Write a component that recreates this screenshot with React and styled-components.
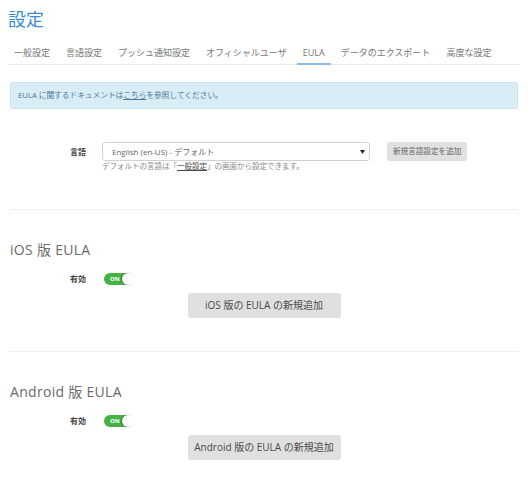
import React from "react";
import styled, { createGlobalStyle } from "styled-components";

const GlobalStyle = createGlobalStyle`
  html, body { margin: 0; padding: 0; background: #fff; }
  body {
    font-family: "Open Sans", "Noto Sans CJK JP", sans-serif;
    color: #555;
  }
`;

const Page = styled.div`
  padding: 0 8px;
  width: 528px;
  box-sizing: border-box;
`;

const Title = styled.h1`
  margin: 7px 0 0;
  font-size: 18px;
  line-height: 24px;
  font-weight: 400;
  color: #3d8dd3;
`;

const Nav = styled.nav`
  display: flex;
  gap: 4px;
  margin-top: 9px;
  border-bottom: 1px solid #e8e8e8;
`;

const Tab = styled.div`
  padding: 5px 6px 2px;
  font-size: 9px;
  line-height: 16px;
  color: #777;
  border-bottom: 2px solid ${(p) => (p.$active ? "#8cbce6" : "transparent")};
  margin-bottom: -1px;
  white-space: nowrap;
`;

const Content = styled.div`
  padding: 0 2px;
`;

const Alert = styled.div`
  margin-top: 17px;
  padding: 0 7px;
  height: 25px;
  line-height: 25px;
  font-size: 7.7px;
  color: #4b7894;
  background: #d9edf7;
  border: 1px solid #c6e6f1;
  border-radius: 2px;
`;

const Link = styled.span`
  text-decoration: underline;
  color: ${(p) => p.$color || "inherit"};
`;

const FormRow = styled.div`
  display: grid;
  grid-template-columns: 76px 1fr;
  column-gap: 16px;
  align-items: center;
  margin-top: ${(p) => p.$mt || 0}px;
`;

const Label = styled.div`
  text-align: right;
  font-size: 8px;
  font-weight: 700;
  color: #444;
  line-height: 12px;
`;

const FieldLine = styled.div`
  display: flex;
  align-items: center;
  gap: 17px;
`;

const Select = styled.div`
  width: 268px;
  height: 19px;
  box-sizing: border-box;
  border: 1px solid #d0d0d0;
  border-radius: 3px;
  padding: 0 9px;
  font-size: 8px;
  line-height: 17px;
  color: #666;
  display: flex;
  align-items: center;
  justify-content: space-between;
`;

const Arrow = styled.svg`
  width: 5px;
  height: 4px;
  margin-right: -5px;
`;

const SmallButton = styled.div`
  height: 19px;
  padding: 0 6px;
  background: #e0e0e0;
  border-radius: 2px;
  font-size: 7.6px;
  line-height: 19px;
  color: #666;
  white-space: nowrap;
`;

const Help = styled.div`
  font-size: 7.5px;
  line-height: 10px;
  color: #888;
`;

const Divider = styled.hr`
  margin: ${(p) => p.$mt}px 0 0;
  border: 0;
  height: 1px;
  background: #efefef;
`;

const Heading = styled.h2`
  margin: 30px 0 0;
  font-size: 14px;
  line-height: 20px;
  font-weight: 400;
  color: #6a6a6a;
  letter-spacing: 0.3px;
`;

const ToggleCell = styled.div`
  padding-left: 2px;
`;

const Toggle = styled.div`
  position: relative;
  width: 29px;
  height: 12px;
  border-radius: 6px;
  background: #44b344;
  box-sizing: border-box;
  padding-left: 6px;
  font-size: 6px;
  font-weight: 700;
  line-height: 12px;
  color: #fff;
`;

const Knob = styled.span`
  position: absolute;
  right: -1px;
  top: -0.5px;
  width: 12px;
  height: 12px;
  border-radius: 50%;
  background: #fff;
  box-shadow: -1px 0 1.5px rgba(0, 0, 0, 0.35);
`;

const BigButton = styled.div`
  margin: 8px auto 0;
  width: 153px;
  height: 25px;
  border-radius: 3px;
  background: #e0e0e0;
  font-size: 10px;
  line-height: 25px;
  text-align: center;
  color: #4a4a4a;
  white-space: nowrap;
`;

const tabs = [
  "一般設定",
  "言語設定",
  "プッシュ通知設定",
  "オフィシャルユーザ",
  "EULA",
  "データのエクスポート",
  "高度な設定",
];

function EulaSection({ title, button }) {
  return (
    <>
      <Heading>{title}</Heading>
      <FormRow $mt={13}>
        <Label>有効</Label>
        <ToggleCell>
          <Toggle>
            ON
            <Knob />
          </Toggle>
        </ToggleCell>
      </FormRow>
      <BigButton>{button}</BigButton>
    </>
  );
}

export default function App() {
  return (
    <>
      <GlobalStyle />
      <Page>
        <Title>設定</Title>
        <Nav>
          {tabs.map((t) => (
            <Tab key={t} $active={t === "EULA"}>
              {t}
            </Tab>
          ))}
        </Nav>
        <Content>
          <Alert>
            EULA に関するドキュメントは<Link>こちら</Link>を参照してください。
          </Alert>
          <FormRow $mt={33}>
            <Label>言語</Label>
            <FieldLine>
              <Select>
                <span>English (en-US) - デフォルト</span>
                <Arrow viewBox="0 0 5 4">
                  <path d="M0 0 L5 0 L2.5 4 Z" fill="#222" />
                </Arrow>
              </Select>
              <SmallButton>新規言語設定を追加</SmallButton>
            </FieldLine>
          </FormRow>
          <FormRow>
            <div />
            <Help>
              デフォルトの言語は「<Link $color="#444">一般設定</Link>」の画面から設定できます。
            </Help>
          </FormRow>
          <Divider $mt={38} />
          <EulaSection title="iOS 版 EULA" button="iOS 版の EULA の新規追加" />
          <Divider $mt={33} />
          <EulaSection
            title="Android 版 EULA"
            button="Android 版の EULA の新規追加"
          />
        </Content>
      </Page>
    </>
  );
}
